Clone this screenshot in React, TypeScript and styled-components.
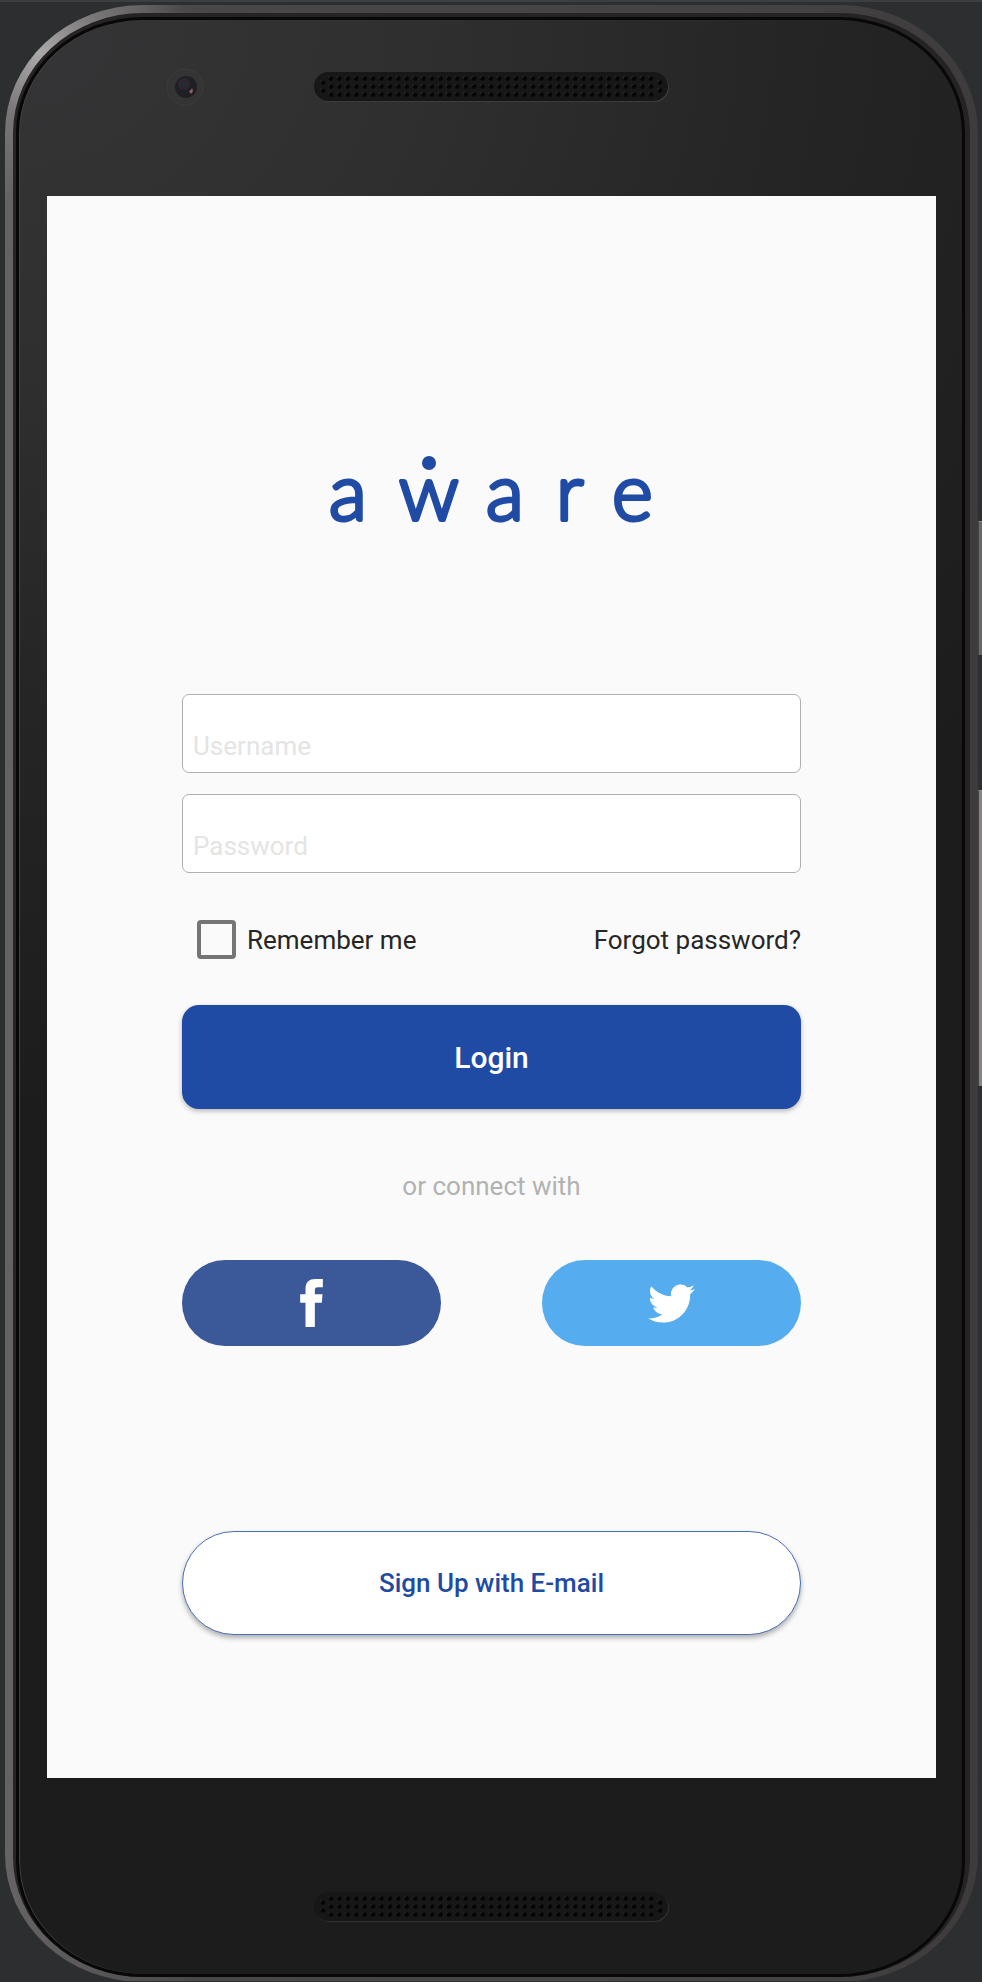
import React from "react";
import styled, { createGlobalStyle } from "styled-components";
import { FaTwitter } from "react-icons/fa";

const blue = "#1f4ba5";

const GlobalStyle = createGlobalStyle`
  *, *::before, *::after { box-sizing: border-box; }
  body {
    margin: 0;
    background: #2c2e30;
    font-family: Roboto, "Liberation Sans", sans-serif;
    font-size: 26px;
    line-height: 30px;
  }
  button, input { font: inherit; }
`;

const Stage = styled.main`
  position: relative;
  overflow: hidden;
  border-top: 2px solid #3c3f41;
  padding: 3px 4px 0 5px;
`;

const SideButton = styled.span<{ $top: number; $length: number; $tone: string }>`
  position: absolute;
  right: 0;
  top: ${(p) => p.$top}px;
  width: 4px;
  height: ${(p) => p.$length}px;
  border-left: 1px solid #454445;
  border-top: 1px solid #8b8989;
  background: ${(p) => p.$tone};
`;

const Shell = styled.div`
  margin-bottom: -1px;
  padding: 8px 8px 5px;
  border-radius: 138px / 128px;
  background:
    radial-gradient(circle 150px at 34px 48px, #aaa8a9, #777576 45%, transparent),
    linear-gradient(90deg, #656364 0, #4a4748 20%, #454243 80%, #3e3b3c);
`;

const Bevel = styled.div`
  padding: 4px 5px 0 3px;
  border-radius: 130px / 120px;
  background: #252323;
`;

const Face = styled.div`
  border: 3px solid #080808;
  border-radius: 127px / 116px;
  box-shadow: inset 1px 0 1px #454344;
  padding: 0 26px 0 28px;
  background: radial-gradient(ellipse 1250px 1100px at 0 0, #353537, #2f2f2f 32%, #252525 62%, #1c1c1c) #1c1c1c;
`;

const TopBezel = styled.header`
  height: 176px;
  padding-top: 48px;
  display: grid;
  grid-template-columns: 1fr auto 1fr;
  align-items: start;
`;

const TopSpeaker = styled.div`
  padding-top: 4px;
  display: flex;
`;

const BottomBezel = styled.footer`
  height: 196px;
  padding-top: 114px;
  display: flex;
  justify-content: center;
`;

const Camera = styled.svg`
  margin: 0 110px 0 auto;
`;

const Screen = styled.section`
  background: #fafafa;
  padding: 234px 135px 143px;
`;

const Brand = styled.h1`
  margin: 0 0 144px;
  display: flex;
  justify-content: center;
  font-weight: 400;
`;

const Form = styled.form`
  display: flex;
  flex-direction: column;
`;

const Field = styled.input`
  width: 100%;
  height: 79px;
  margin-bottom: 21px;
  padding: 24px 10px 0;
  border: 1px solid #b0b0b0;
  border-radius: 7px;
  background: #fff;
  color: #212121;
  outline: none;
  &::placeholder { color: #e4e4e4; opacity: 1; }
`;

const Options = styled.div`
  display: flex;
  justify-content: space-between;
  align-items: center;
  margin: 26px 0 46px;
  color: #262626;
`;

const Remember = styled.label`
  display: flex;
  align-items: center;
  gap: 11px;
  padding-left: 15px;
`;

const Checkbox = styled.input`
  appearance: none;
  width: 39px;
  height: 39px;
  margin: 0;
  border: 4px solid #757575;
  border-radius: 4px;
  &:checked { background: ${blue}; }
`;

const ForgotLink = styled.a`
  color: inherit;
  text-decoration: none;
`;

const LoginButton = styled.button`
  height: 104px;
  padding: 2px 0 0;
  border: 0;
  border-radius: 17px;
  background: ${blue};
  color: #fff;
  font-size: 30px;
  font-weight: 500;
  box-shadow: 0 2px 5px rgba(0, 0, 0, 0.28);
`;

const Divider = styled.p`
  margin: 62px 0 59px;
  text-align: center;
  color: #b2b2b2;
`;

const Socials = styled.div`
  display: grid;
  grid-template-columns: 1fr 1fr;
  gap: 101px;
  margin-bottom: 185px;
`;

const SocialButton = styled.button<{ $color: string }>`
  height: 86px;
  display: flex;
  align-items: center;
  justify-content: center;
  padding: 0;
  border: 0;
  border-radius: 43px;
  background: ${(p) => p.$color};
  color: #fff;
`;

const SignUpButton = styled.button`
  height: 104px;
  border: 1px solid #4a6fb7;
  border-radius: 52px;
  background: #fff;
  color: ${blue};
  font-weight: 500;
  box-shadow: 0 3px 5px rgba(0, 0, 0, 0.3);
`;

const columns = Array.from({ length: 39 }, (_, i) => 17 + i * 8.42);
const holes: [number, number][] = [
  [9, 10.5],
  [9, 18.5],
  ...columns.flatMap((x): [number, number][] => [[x, 6.5], [x, 14.5], [x, 22.5]]),
  [346, 10.5],
  [346, 18.5],
];

function Speaker({ shine }: { shine: string }) {
  return (
    <svg width="356" height="30" viewBox="0 0 356 30" aria-hidden="true">
      <rect x="1" y="1" width="354" height="29" rx="14.5" fill={shine} />
      <rect width="354" height="29" rx="14.5" fill="#171717" />
      {holes.map(([x, y]) => (
        <g key={`${x}-${y}`}>
          <circle cx={x - 1} cy={y - 1} r="1.6" fill={shine} />
          <circle cx={x} cy={y} r="2.2" fill="#050505" />
        </g>
      ))}
    </svg>
  );
}

function Logo() {
  return (
    <svg width="340" height="120" viewBox="0 -20 340 120" role="img" aria-label="aware">
      <text
        x="7 77 164 234 290"
        y="70"
        fontFamily="Lato, sans-serif"
        fontSize="78"
        fontWeight="300"
        fill={blue}
        stroke={blue}
        strokeWidth="4"
        strokeLinejoin="round"
      >
        aware
      </text>
      <circle cx="107" cy="13" r="7" fill={blue} />
    </svg>
  );
}

export default function App() {
  return (
    <>
      <GlobalStyle />
      <Stage>
        <SideButton $top={519} $length={134} $tone="#696868" />
        <SideButton $top={788} $length={296} $tone="#858383" />
        <Shell>
          <Bevel>
            <Face>
              <TopBezel>
                <Camera width="38" height="38" viewBox="0 0 38 38" aria-hidden="true">
                  <circle cx="19" cy="19" r="18" fill="#343435" stroke="#3c3c3d" />
                  <circle cx="20" cy="19" r="11" fill="#201f26" />
                  <circle cx="18" cy="16" r="6" fill="#292832" />
                  <path d="M23 23l2-1 1-2 1 3-2 3z" fill="#986060" />
                </Camera>
                <TopSpeaker>
                  <Speaker shine="#3c3c3c" />
                </TopSpeaker>
              </TopBezel>
              <Screen>
                <Brand>
                  <Logo />
                </Brand>
                <Form onSubmit={(e) => e.preventDefault()}>
                  <Field type="text" placeholder="Username" aria-label="Username" />
                  <Field type="password" placeholder="Password" aria-label="Password" />
                  <Options>
                    <Remember>
                      <Checkbox type="checkbox" />
                      Remember me
                    </Remember>
                    <ForgotLink href="#forgot">Forgot password?</ForgotLink>
                  </Options>
                  <LoginButton type="submit">Login</LoginButton>
                  <Divider>or connect with</Divider>
                  <Socials>
                    <SocialButton type="button" $color="#3b5998" aria-label="Facebook">
                      <svg width="23" height="48" viewBox="0 0 68 144" aria-hidden="true">
                        <path
                          fill="currentColor"
                          d="M16 144V71H0V46H16V30C16 10 26 0 46 0H68V25H53C46 25 44 28 44 35V46H67L65 71H44V144Z"
                        />
                      </svg>
                    </SocialButton>
                    <SocialButton type="button" $color="#55acee" aria-label="Twitter">
                      <FaTwitter size={47} />
                    </SocialButton>
                  </Socials>
                  <SignUpButton type="button">Sign Up with E-mail</SignUpButton>
                </Form>
              </Screen>
              <BottomBezel>
                <Speaker shine="#303030" />
              </BottomBezel>
            </Face>
          </Bevel>
        </Shell>
      </Stage>
    </>
  );
}
